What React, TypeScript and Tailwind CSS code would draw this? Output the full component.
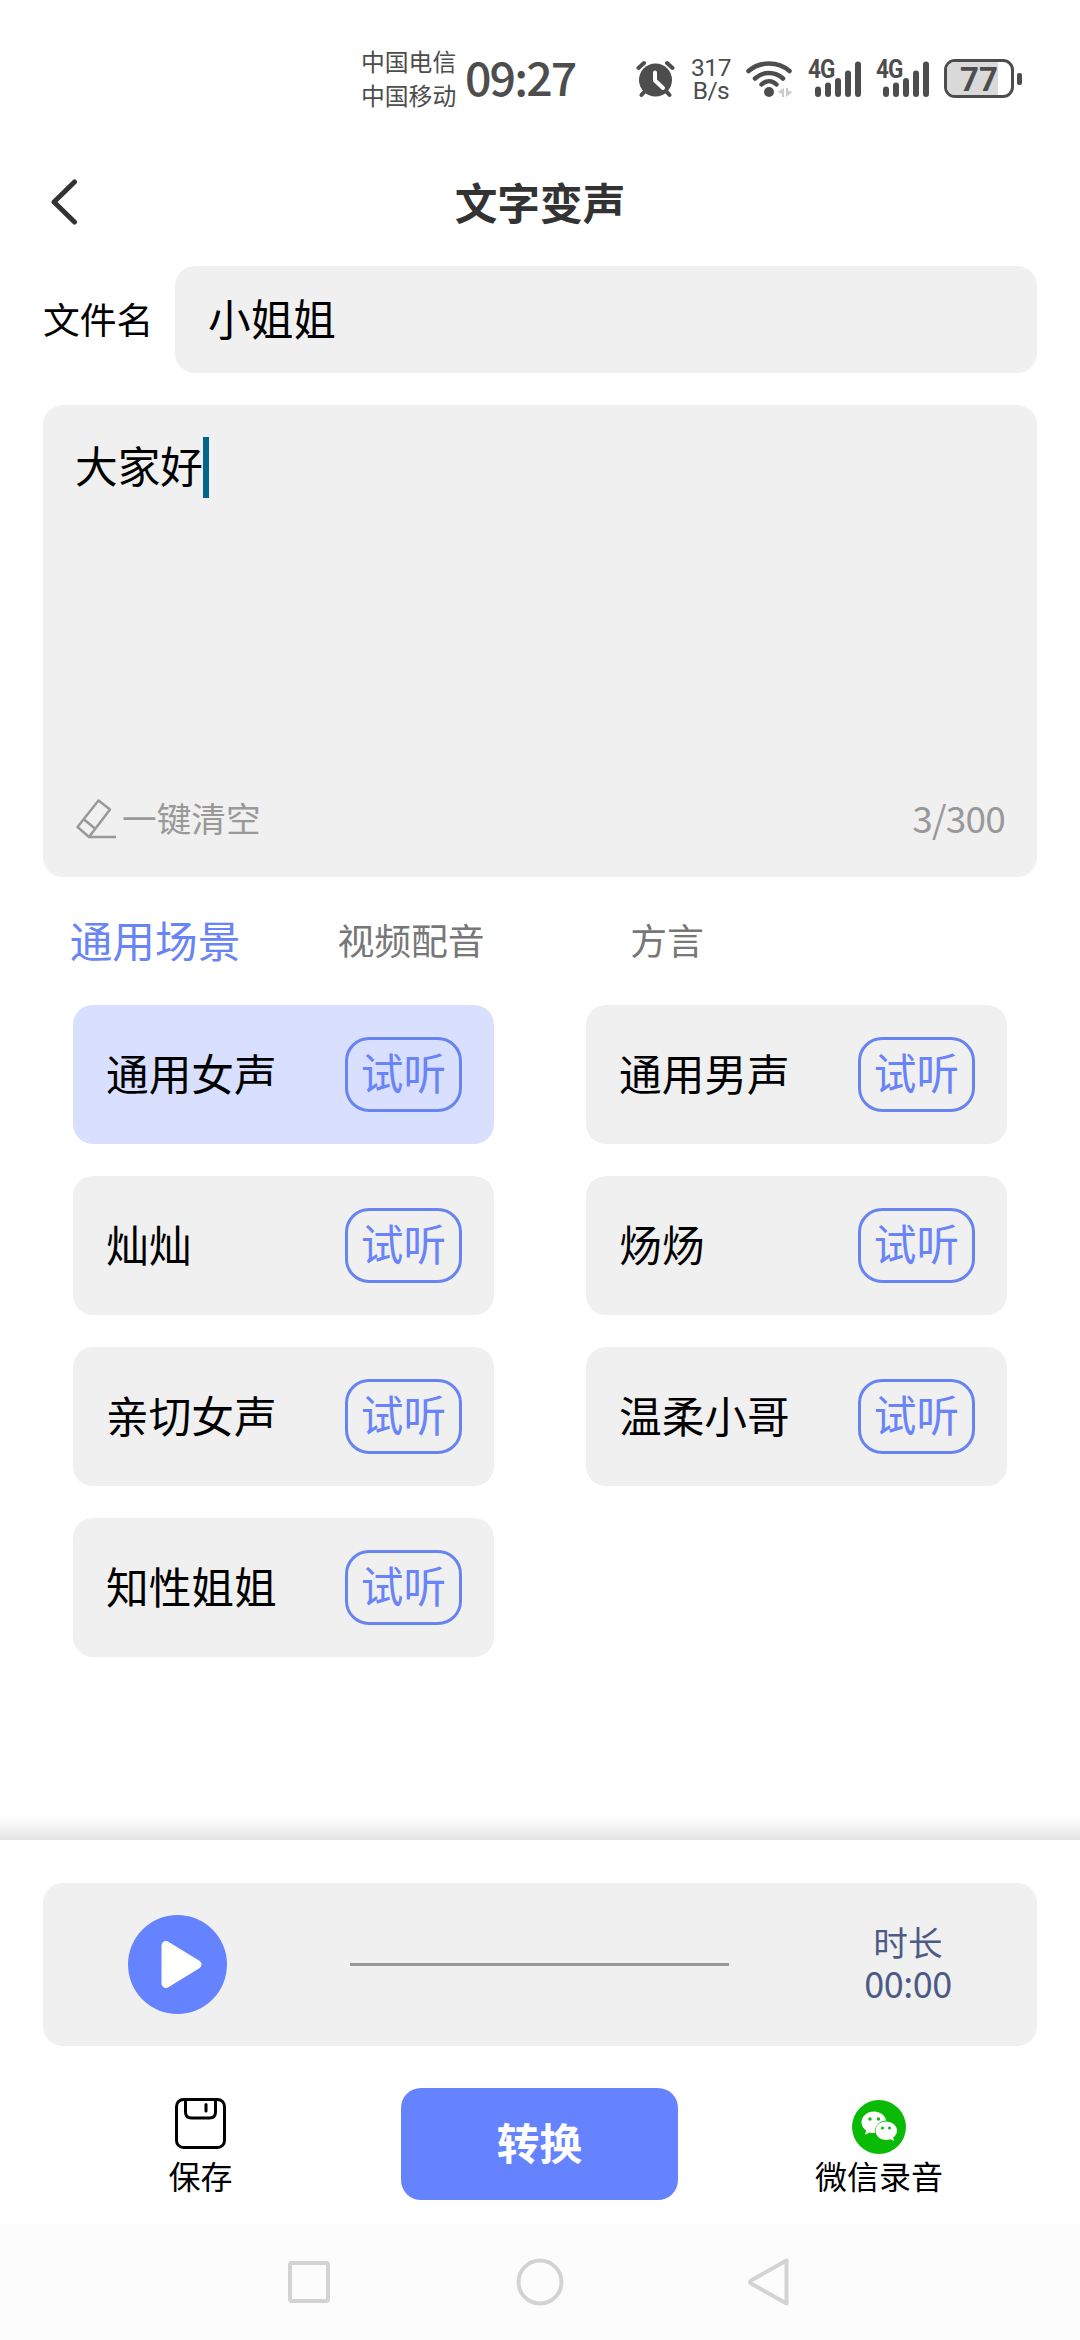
type Voice = { id: number; name: string }

const voices: Voice[] = [
  { id: 1, name: '通用女声' },
  { id: 2, name: '通用男声' },
  { id: 3, name: '灿灿' },
  { id: 4, name: '炀炀' },
  { id: 5, name: '亲切女声' },
  { id: 6, name: '温柔小哥' },
  { id: 7, name: '知性姐姐' },
]

const tabs = ['通用场景', '视频配音', '方言']

function Signal() {
  return (
    <div className="relative h-[38px] w-[54px]">
      <span className="absolute left-0 top-0 origin-left scale-x-90 font-['Roboto'] text-[25px] font-bold leading-[19px] tracking-[-1px]">
        4G
      </span>
      <svg className="absolute left-0 top-0" width="54" height="38" viewBox="0 0 54 38" stroke="#4d4d4d" strokeWidth="6" strokeLinecap="round">
        <path d="M10 29.500V34M20 25.500V34M30 21V34M40 13.500V34M50 4.500V34" />
      </svg>
    </div>
  )
}

function StatusBar() {
  return (
    <div className="flex h-[160px] items-start text-[#4d4d4d]">
      <div className="ml-[361px] mt-[44px] w-[95px] whitespace-nowrap text-[23.8px] leading-[34px]">
        <div>中国电信</div>
        <div>中国移动</div>
      </div>
      <div className="ml-[9px] mt-[48px] w-[116px] whitespace-nowrap text-[46.5px] font-medium leading-[56px] tracking-[-1.9px]">
        09:27
      </div>
      <svg className="ml-[55px] mt-[60px] shrink-0" width="40" height="38" viewBox="0 0 40 38" fill="none" stroke="#4d4d4d" strokeLinecap="round">
        <circle cx="19.500" cy="20" r="16.500" fill="#4d4d4d" stroke="none" />
        <path d="M2.500 8L8 3M36.500 8L31 3M9 31L5.500 35M30 31L33.500 35" strokeWidth="4" />
        <path d="M19 12.500V20.500L27 28" stroke="#fff" strokeWidth="4" strokeLinejoin="round" />
      </svg>
      <div className="ml-[15px] mt-[56px] w-[40px] text-center font-['Roboto'] text-[24.500px] leading-[23px] tracking-[-0.5px]">
        <div>317</div>
        <div>B/s</div>
      </div>
      <svg className="ml-[15px] mt-[60px] shrink-0" width="48" height="38" viewBox="0 0 48 38" fill="none" stroke="#4d4d4d" strokeWidth="4.500" strokeLinecap="round">
        <path d="M2.500 11C14 1 32 1 43.500 11" />
        <path d="M9 18.500C17 11 29 11 37 18.500" />
        <path d="M15.500 24.500C20 20 26 20 30.500 24.500" />
        <circle cx="23" cy="32" r="5" fill="#4d4d4d" stroke="none" />
        <path d="M38 28V37H36V34L31.500 32ZM40 28V37L46.500 32L42 30.500V28Z" fill="#ccc" stroke="none" />
      </svg>
      <div className="ml-[14px] mt-[60px] flex gap-[14px]">
        <Signal />
        <Signal />
      </div>
      <div className="ml-[14px] mt-[59px] flex items-center gap-[3px]">
        <div className="relative h-[39px] w-[70px] overflow-hidden rounded-[11px] border-3 border-[#4d4d4d]">
          <div className="absolute inset-y-0 left-0 w-[51px] bg-[#d9d9d9]" />
          <div className="relative text-center font-['Roboto'] text-[33px] font-bold leading-[35px]">77</div>
        </div>
        <div className="h-[12px] w-[5px] rounded-[2px] bg-[#4d4d4d]" />
      </div>
    </div>
  )
}

function VoiceCard({ name, active }: { name: string; active: boolean }) {
  return (
    <div
      className={[
        'flex h-[139px] items-center justify-between rounded-[20px] pl-[33px] pr-8',
        active ? 'bg-[#d8dfff]' : 'bg-[#f0f0f0]',
      ].join(' ')}
    >
      <span className="-mt-[3px] text-[42.667px]">{name}</span>
      <button className="h-[75px] w-[117px] rounded-[24px] border-3 border-[#6884f0] pb-[5px] text-[42.667px] leading-[62px] text-[#6884f8]">
        试听
      </button>
    </div>
  )
}

function Player() {
  return (
    <div className="mx-[43px] mt-[43px] flex h-[163px] rounded-[20px] bg-[#f0f0f0]">
      <svg className="ml-[85px] mt-[32px] shrink-0" width="99" height="99" viewBox="0 0 99 99">
        <circle cx="49.500" cy="49.500" r="49.500" fill="#6683ff" />
        <path d="M38 30.500L69 49.500L38 68.500Z" fill="#fff" stroke="#fff" strokeWidth="9" strokeLinejoin="round" />
      </svg>
      <div className="ml-[123px] mt-[80px] h-[3px] w-[379px] bg-[#999]" />
      <div className="ml-[79px] mt-[38px] w-[200px] text-center text-[#4e5a86]">
        <div className="text-[34.667px] leading-[41px]">时长</div>
        <div className="text-[36px] leading-[41px] tracking-[-0.5px]">00:00</div>
      </div>
    </div>
  )
}

function BottomActions() {
  return (
    <div className="mt-[42px] flex h-[112px] justify-between">
      <div className="flex w-[401px] flex-col items-center">
        <svg className="mt-[10px]" width="51" height="51" viewBox="0 0 51 51" fill="none" stroke="#000" strokeWidth="3">
          <rect x="1.500" y="1.500" width="48" height="48" rx="7" />
          <path d="M10.500 2V14Q10.500 20 16.500 20H34.500Q40.500 20 40.500 14V2" />
          <path d="M31 6.500V13" strokeLinecap="round" />
        </svg>
        <span className="mt-[2px] text-[32px] leading-[48px]">保存</span>
      </div>
      <button className="w-[277px] rounded-[20px] bg-[#6683ff] pb-[5px] text-[42.667px] font-bold text-white">转换</button>
      <div className="flex w-[402px] flex-col items-center">
        <svg className="mt-[12px]" width="54" height="54" viewBox="0 0 54 54">
          <circle cx="27" cy="27" r="27" fill="#09bb07" />
          <path d="M22 11.500C15 11.500 9.500 16.300 9.500 22.300C9.500 25.700 11.300 28.500 14.200 30.500L13 34.800L17.700 32.400Q20 33 23 33C22 26 28 20.500 34.200 20.500C33 15.300 28 11.500 22 11.500Z" fill="#fff" />
          <path d="M34 21.500C28 21.500 23.500 25.500 23.500 30.700C23.500 36 28.500 40 34 40Q36.500 40 38.500 39.200L42 41L41.200 37.500C43.500 35.800 45 33.500 45 30.700C45 25.500 40 21.500 34 21.500Z" fill="#fff" />
          <g fill="#09bb07">
            <circle cx="18" cy="19" r="1.700" />
            <circle cx="26.500" cy="19" r="1.700" />
            <circle cx="30.500" cy="28" r="1.500" />
            <circle cx="37.500" cy="28" r="1.500" />
          </g>
        </svg>
        <span className="-mt-[3px] text-[32px] leading-[48px]">微信录音</span>
      </div>
    </div>
  )
}

export default function App() {
  return (
    <div className="flex h-[2340px] w-[1080px] flex-col overflow-hidden bg-white font-['Noto_Sans_CJK_SC',sans-serif] text-black">
      <StatusBar />

      <header className="flex h-[84px] items-center text-[#333]">
        <svg className="ml-[50px] shrink-0" width="28" height="48" viewBox="0 0 28 48" fill="none" stroke="#333" strokeWidth="5" strokeLinecap="round" strokeLinejoin="round">
          <path d="M24.500 4L4 24L24.500 44" />
        </svg>
        <h1 className="ml-[-28px] w-[980px] text-center text-[42.667px] font-bold">文字变声</h1>
      </header>

      <div className="mt-[22px] flex h-[107px] items-center pl-[43px] pr-[43px]">
        <label className="-mt-[1px] w-[132px] text-[36.800px]">文件名</label>
        <div className="flex h-full flex-1 items-center rounded-[20px] bg-[#f0f0f0] pb-[4px] pl-[33px] text-[42.667px]">
          小姐姐
        </div>
      </div>

      <div className="mx-[43px] mt-[32px] flex h-[472px] flex-col justify-between rounded-[20px] bg-[#f0f0f0] px-8">
        <div className="flex pt-8">
          <span className="text-[42.667px] leading-[55px]">大家好</span>
          <span className="h-[61px] w-[6px] bg-[#03658c]" />
        </div>
        <div className="mb-[32px] flex h-[52px] items-center text-[#999]">
          <svg width="43" height="42" viewBox="0 0 43 42" fill="none" stroke="#999" strokeWidth="2.500" strokeLinejoin="round">
            <path d="M23.500 2.500L35 11.500L14 39L2.500 29ZM9 21.500L20 30.500M13 39H41" />
          </svg>
          <span className="-mt-[5px] ml-[4px] text-[34.667px]">一键清空</span>
          <span className="-mt-[3px] ml-auto text-[37px] tracking-[-0.8px]">3/300</span>
        </div>
      </div>

      <nav className="ml-[27px] flex h-[128px] items-center pb-[3px]">
        {tabs.map((tab, i) => (
          <div
            key={tab}
            className={['w-[256px] text-center', i === 0 ? 'text-[42.667px] text-[#6884f5]' : 'text-[36.800px] text-[#777]'].join(' ')}
          >
            {tab}
          </div>
        ))}
      </nav>

      <div className="ml-[73px] grid grid-cols-[421px_421px] gap-x-[92px] gap-y-8">
        {voices.map((voice) => (
          <VoiceCard key={voice.id} name={voice.name} active={voice.id === 1} />
        ))}
      </div>

      <div className="mt-auto h-[24px] bg-gradient-to-b from-white to-[#e4e4e4]" />
      <footer className="flex h-[384px] flex-col">
        <Player />
        <BottomActions />
      </footer>

      <div className="flex h-[116px] shrink-0 bg-[#fcfcfc]">
        <svg className="ml-[284px] mt-[32px]" width="510" height="52" viewBox="0 0 510 52" fill="none" stroke="#d3d3d3" strokeWidth="4" strokeLinejoin="round">
          <rect x="6" y="7" width="38" height="38" rx="2" />
          <circle cx="256" cy="26" r="21.500" />
          <path d="M502.500 4.500V47.500L467 27.500Q465 26 467 24.500Z" />
        </svg>
      </div>
    </div>
  )
}
